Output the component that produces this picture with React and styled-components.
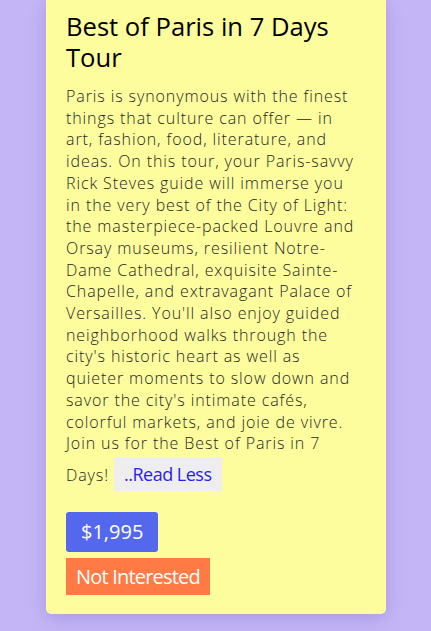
import React, { useState } from 'react';
import styled, { createGlobalStyle } from 'styled-components';

const GlobalStyle = createGlobalStyle`
  html, body {
    margin: 0;
    padding: 0;
    background: #c4b6f6;
    font-family: "Open Sans", "Liberation Sans", sans-serif;
  }
`;

const Page = styled.div`
  display: flex;
  justify-content: flex-start;
  padding: 0 45px 17px 46px;
  min-height: 631px;
  box-sizing: border-box;
`;

const Card = styled.div`
  width: 340px;
  box-sizing: border-box;
  background: #fdfd9e;
  border-radius: 0 0 5px 5px;
  padding: 11px 26px 19px 20px;
  box-shadow: 0 4px 18px rgba(90, 60, 180, 0.25);
  align-self: flex-start;
`;

const Title = styled.h2`
  margin: 0 0 13px;
  font-size: 25.6px;
  line-height: 31px;
  font-weight: 400;
  color: #000;
`;

const Description = styled.p`
  margin: 0;
  font-size: 16px;
  line-height: 21.7px;
  font-weight: 300;
  letter-spacing: 0.9px;
  color: #262626;
`;

const ReadMore = styled.button`
  font-family: inherit;
  font-size: 18px;
  letter-spacing: -0.5px;
  color: #2b1bf3;
  background: #eeeeee;
  border: none;
  padding: 5px 10px 5px;
  margin: 2px 0 0;
  cursor: pointer;
`;

const Actions = styled.div`
  display: flex;
  flex-direction: column;
  align-items: flex-start;
  gap: 6px;
  margin-top: 21px;
`;

const ActionButton = styled.button`
  font-family: inherit;
  font-size: 20px;
  color: #fff;
  border: none;
  cursor: pointer;
  background: ${p => (p.$variant === 'price' ? '#5468ee' : '#ff7a45')};
  border-radius: ${p => (p.$variant === 'price' ? '3px' : '0')};
  padding: ${p => (p.$variant === 'price' ? '6px 15px 7px' : '5px 10px 5px')};
  letter-spacing: ${p => (p.$variant === 'price' ? '0' : '-0.8px')};
`;

const TEXT =
  "Paris is synonymous with the finest things that culture can offer — in art, fashion, food, literature, and ideas. On this tour, your Paris-savvy Rick Steves guide will immerse you in the very best of the City of Light: the masterpiece-packed Louvre and Orsay museums, resilient Notre-Dame Cathedral, exquisite Sainte-Chapelle, and extravagant Palace of Versailles. You'll also enjoy guided neighborhood walks through the city's historic heart as well as quieter moments to slow down and savor the city's intimate cafés, colorful markets, and joie de vivre. Join us for the Best of Paris in 7 Days!";

export default function App() {
  const [expanded, setExpanded] = useState(true);
  return (
    <>
      <GlobalStyle />
      <Page>
        <Card>
          <Title>Best of Paris in 7 Days Tour</Title>
          <Description>
            {expanded ? TEXT : TEXT.slice(0, 200)}{' '}
            <ReadMore onClick={() => setExpanded(!expanded)}>
              {expanded ? '..Read Less' : '..Read More'}
            </ReadMore>
          </Description>
          <Actions>
            <ActionButton $variant="price">$1,995</ActionButton>
            <ActionButton $variant="remove">Not Interested</ActionButton>
          </Actions>
        </Card>
      </Page>
    </>
  );
}
